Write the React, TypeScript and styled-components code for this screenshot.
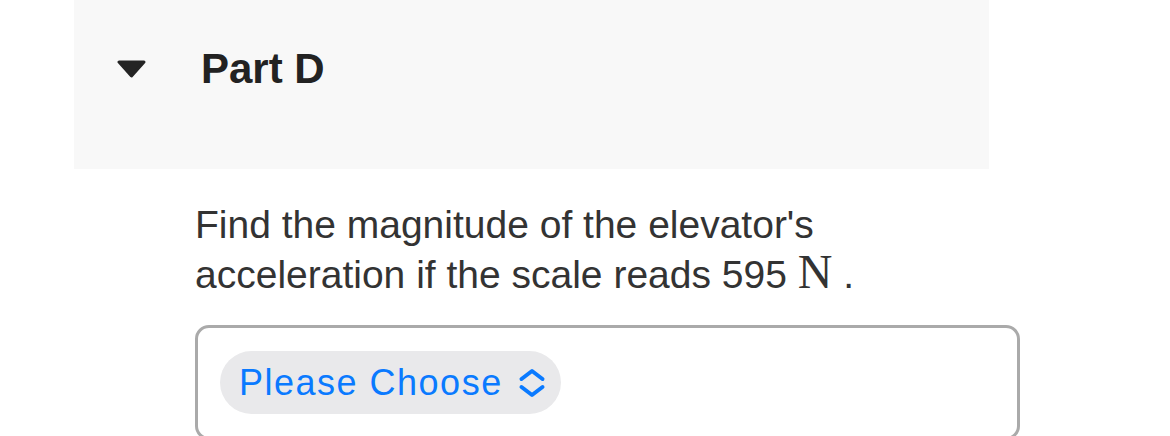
import styled, { createGlobalStyle } from 'styled-components';

const GlobalStyle = createGlobalStyle`
  html, body {
    margin: 0;
    padding: 0;
    background: #ffffff;
  }
  body {
    font-family: 'Liberation Sans', Arial, Helvetica, sans-serif;
    color: #333333;
  }
`;

const App = () => {
  return (
    <>
      <GlobalStyle />
      <Page>
        <PartHeader>
          <Caret viewBox="0 0 31 18" aria-hidden="true">
            <path d="M3 2 L28 2 L15.5 16 Z" fill="#242424" stroke="#242424" strokeWidth="3" strokeLinejoin="round" />
          </Caret>
          <PartTitle>Part D</PartTitle>
        </PartHeader>

        <PartBody>
          <Prompt>
            Find the magnitude of the elevator's acceleration if the scale reads 595 <MathUnit>N</MathUnit> .
          </Prompt>

          <AnswerBox>
            <ChooseButton type="button">
              <span>Please Choose</span>
              <UpDown viewBox="0 0 28 30" aria-hidden="true">
                <path d="M3.5 11 L14 3 L24.5 11" />
                <path d="M3.5 19 L14 27 L24.5 19" />
              </UpDown>
            </ChooseButton>
          </AnswerBox>
        </PartBody>
      </Page>
    </>
  );
};

export default App;

const Page = styled.div`
  padding-left: 74px;
  width: 1170px;
  height: 436px;
  overflow: hidden;
  box-sizing: border-box;
`;

const PartHeader = styled.div`
  display: flex;
  align-items: center;
  width: 915px;
  height: 169px;
  box-sizing: border-box;
  padding: 0 0 31px 42px;
  background: #f8f8f8;
`;

const Caret = styled.svg`
  width: 31px;
  height: 18px;
  flex-shrink: 0;
  margin-right: 54px;
`;

const PartTitle = styled.h2`
  margin: 0;
  font-size: 42px;
  font-weight: 700;
  color: #222222;
`;

const PartBody = styled.div`
  padding: 31px 0 0 121px;
`;

const Prompt = styled.p`
  margin: 0;
  width: 700px;
  font-size: 39px;
  line-height: 50px;
  color: #333333;
`;

const MathUnit = styled.span`
  font-family: 'Liberation Serif', 'Times New Roman', serif;
  font-size: 48px;
  line-height: 40px;
`;

const AnswerBox = styled.div`
  margin-top: 25px;
  width: 825px;
  box-sizing: border-box;
  border: 3px solid #aaaaaa;
  border-radius: 14px;
  padding: 23px 22px;
`;

const ChooseButton = styled.button`
  display: inline-flex;
  align-items: center;
  gap: 15px;
  height: 63px;
  padding: 0 15px 0 19px;
  border: none;
  border-radius: 32px;
  background: #e9e9eb;
  color: #0a7aff;
  font-family: 'Liberation Sans', Arial, sans-serif;
  font-size: 36px;
  letter-spacing: 1.5px;
  cursor: pointer;
`;

const UpDown = styled.svg`
  width: 28px;
  height: 30px;
  fill: none;
  stroke: #0a7aff;
  stroke-width: 4;
  stroke-linecap: round;
  stroke-linejoin: round;
`;
